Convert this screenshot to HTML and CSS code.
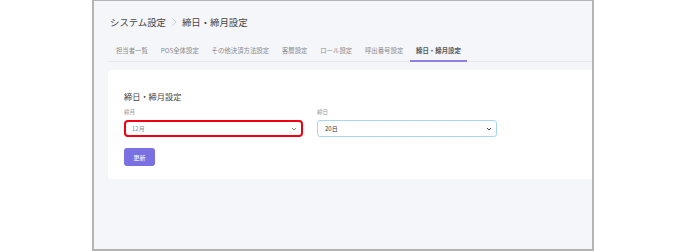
FILE: index.html
```html
<!DOCTYPE html>
<html lang="ja">
<head>
    <meta charset="UTF-8">
    <meta name="viewport" content="width=device-width, initial-scale=1.0">
    <title>締日・締月設定</title>
    <link rel="stylesheet" href="styles.css">
</head>
<body>
    <div class="frame">
        <div class="page">
            <div class="breadcrumb">
                <span>システム設定</span>
                <svg class="crumb-sep" width="6" height="10" viewBox="0 0 6 10"><path d="M1 1 L5 5 L1 9" fill="none" stroke="#c4c6cc" stroke-width="0.8"/></svg>
                <span>締日・締月設定</span>
            </div>

            <nav class="tabs">
                <a class="tab">担当者一覧</a>
                <a class="tab">POS全体設定</a>
                <a class="tab">その他決済方法設定</a>
                <a class="tab">客層設定</a>
                <a class="tab">ロール設定</a>
                <a class="tab">呼出番号設定</a>
                <a class="tab active">締日・締月設定</a>
            </nav>

            <section class="card">
                <h2>締日・締月設定</h2>
                <div class="fields">
                    <div class="field">
                        <label>締月</label>
                        <div class="select is-error">
                            <span class="value muted">12月</span>
                            <svg width="6" height="4" viewBox="0 0 6 4"><path d="M1 1 L3 3 L5 1" fill="none" stroke="#777" stroke-width="0.9"/></svg>
                        </div>
                    </div>
                    <div class="field">
                        <label>締日</label>
                        <div class="select is-focus">
                            <span class="value">20日</span>
                            <svg width="6" height="4" viewBox="0 0 6 4"><path d="M1 1 L3 3 L5 1" fill="none" stroke="#333" stroke-width="0.9"/></svg>
                        </div>
                    </div>
                </div>
                <button class="btn-primary">更新</button>
            </section>
        </div>
    </div>
</body>
</html>
```

FILE: styles.css
```css
body {
    margin: 0;
    background-color: #ffffff;
    font-family: "Noto Sans CJK JP", "Noto Sans", sans-serif;
}

.frame {
    margin-left: 92px;
    width: 502px;
    height: 251px;
    box-sizing: border-box;
    border: 2px solid #b4b4b4;
    border-top-width: 1px;
    background-color: #f5f6fa;
    overflow: hidden;
}

.page {
    padding: 14px 0 0 14px;
}

.breadcrumb {
    display: flex;
    align-items: center;
    gap: 4px;
    padding-left: 2px;
    font-size: 9.4px;
    line-height: 14px;
    color: #454545;
}

.crumb-sep {
    margin: 0 1px;
}

.tabs {
    display: flex;
    margin-top: 9px;
    border-bottom: 1px solid #e6e8ee;
}

.tab {
    padding: 8px 6.4px 4px;
    font-size: 6.4px;
    line-height: 10px;
    color: #8a8a8a;
    border-bottom: 2px solid transparent;
    margin-bottom: -1px;
    cursor: pointer;
}

.tab:first-child {
    margin-left: 1.5px;
}

.tab.active {
    color: #555;
    font-weight: 700;
    border-bottom-color: #8c80e4;
}

.card {
    margin-top: 8px;
    background-color: #ffffff;
    border-radius: 3px 0 0 3px;
    padding: 20px 16px 13px;
}

.card h2 {
    margin: 0 0 6px;
    font-size: 8.2px;
    line-height: 12px;
    font-weight: 400;
    color: #444;
}

.fields {
    display: flex;
    gap: 14px;
}

.field {
    display: flex;
    flex-direction: column;
    gap: 4px;
}

.field label {
    font-size: 5.6px;
    line-height: 8px;
    color: #999;
}

.select {
    width: 180px;
    height: 17px;
    box-sizing: border-box;
    display: flex;
    align-items: center;
    justify-content: space-between;
    padding: 0 4px 0 7px;
    border-radius: 3px;
    background-color: #fff;
}

.select .value {
    font-size: 6px;
    color: #333;
}

.select .value.muted {
    color: #888;
}

.select.is-error {
    width: 179px;
    border: 2px solid #f00010;
    border-radius: 4px;
    padding-left: 6px;
}

.select.is-focus {
    border: 1px solid #a6d6f0;
}

.btn-primary {
    margin-top: 11px;
    width: 31px;
    height: 18px;
    padding: 0;
    border: none;
    border-radius: 3px;
    background-color: #7b70e2;
    color: #fff;
    font-family: inherit;
    font-size: 6px;
    cursor: pointer;
}
```
